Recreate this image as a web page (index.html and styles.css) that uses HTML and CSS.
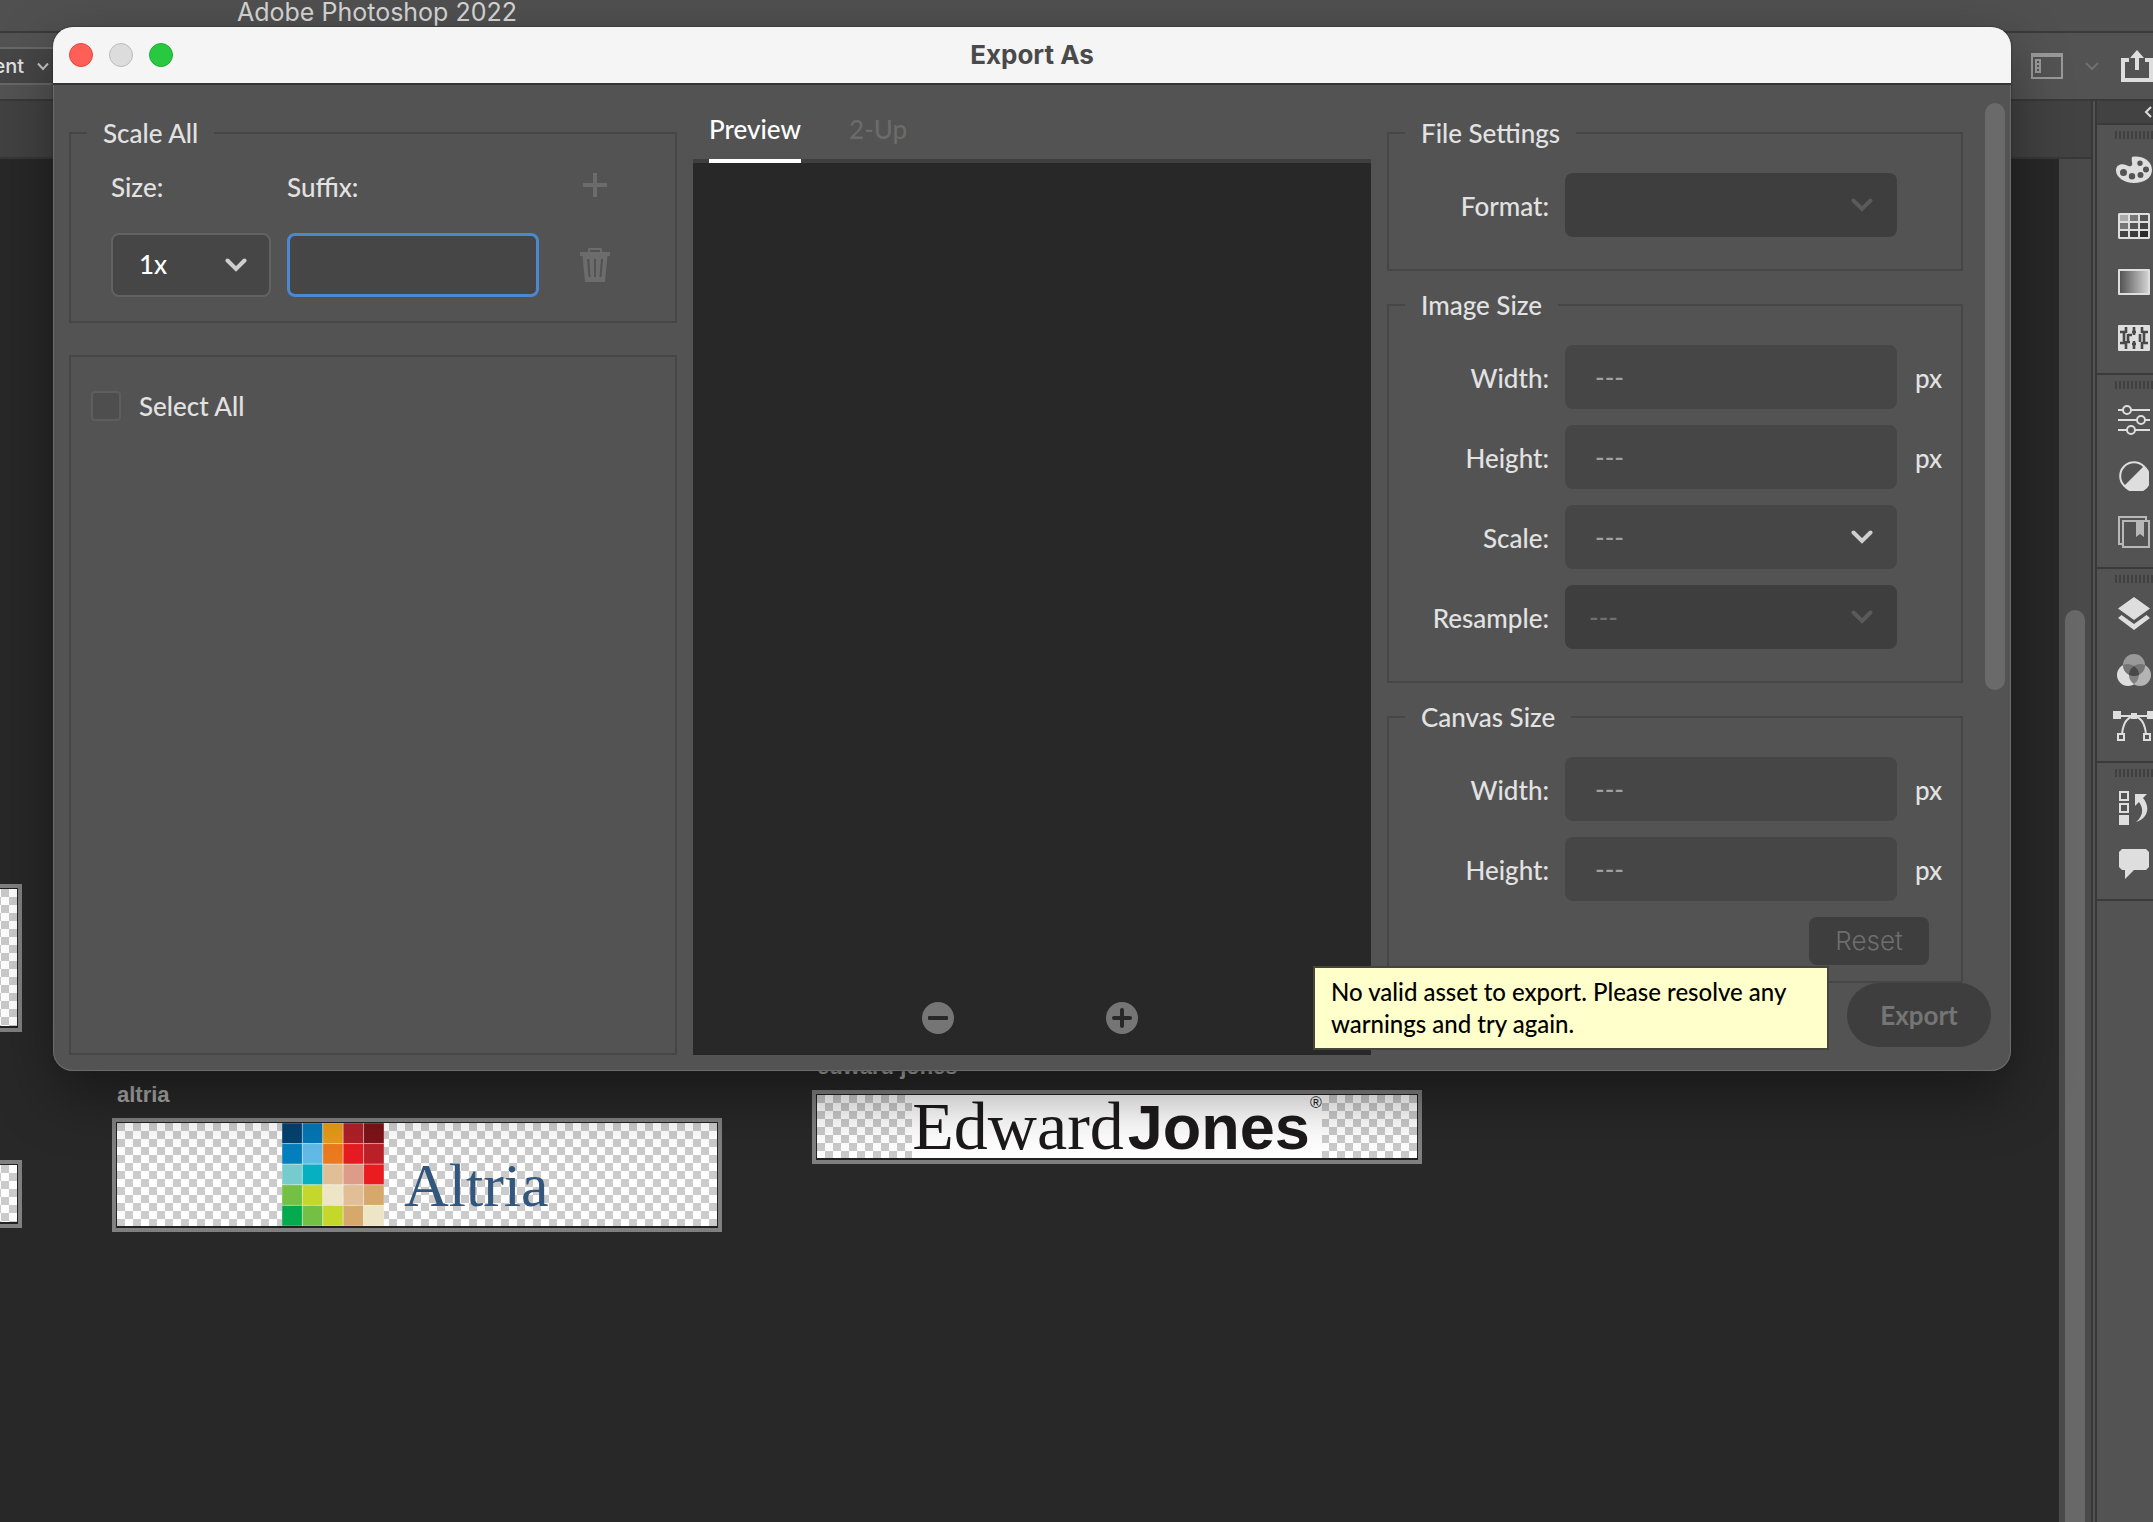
FILE: index.html
```html
<!DOCTYPE html>
<html lang="en">
<head>
<meta charset="utf-8">
<title>Adobe Photoshop 2022</title>
<link rel="stylesheet" href="styles.css">
</head>
<body>
<div class="app">
  <header class="titlebar">Adobe Photoshop 2022</header>
  <div class="options">
    <button class="options-mode" type="button">ent
      <svg width="14" height="9" viewBox="0 0 14 9"><path d="M2 1.500l5 5.500 5-5.500" fill="none" stroke="#c8c8c8" stroke-width="2"/></svg>
    </button>
    <div class="options-right">
      <button class="icon-button" type="button" aria-label="Workspace">
        <svg width="32" height="26" viewBox="0 0 32 26"><path d="M0 0h32v26H0zM2 4v20h28V4z" fill="#9a9a9a" fill-rule="evenodd"/><path d="M4 6h6v14H4zM6 8v2h2V8zM6 12v2h2v-2zM6 16v2h2v-2z" fill="#9a9a9a" fill-rule="evenodd"/></svg>
      </button>
      <svg width="14" height="9" viewBox="0 0 14 9"><path d="M1 1l6 6 6-6" fill="none" stroke="#707070" stroke-width="2"/></svg>
      <button class="icon-button" type="button" aria-label="Share">
        <svg width="32" height="32" viewBox="0 0 32 32"><path d="M8 8H0v24h32V8h-8v4h4v16H4V12h4z" fill="#dedede"/><path d="M16 0l7 8h-5v12h-4V8H9z" fill="#dedede"/></svg>
      </button>
    </div>
  </div>
  <div class="workspace">
    <main class="document">
      <div class="document-tabs"></div>
      <div class="document-view">
        <div class="canvas">
          <div class="artboard artboard-edge-a"><div class="checker"></div></div>
          <div class="artboard artboard-edge-b"><div class="checker"></div></div>
          <div class="artboard-group group-altria">
            <div class="artboard-name">altria</div>
            <div class="artboard">
              <div class="checker altria">
                <svg width="102" height="103" viewBox="0 0 102 103">
                  <g stroke="#fff" stroke-opacity=".35" stroke-width="1">
                    <path d="M0 0h20.400v20.600H0z" fill="#04426f"/><path d="M20.400 0h20.400v20.600H20.400z" fill="#0477b6"/><path d="M40.800 0h20.400v20.600H40.800z" fill="#e69a18"/><path d="M61.200 0h20.400v20.600H61.200z" fill="#b02028"/><path d="M81.600 0H102v20.600H81.600z" fill="#7c1418"/>
                    <path d="M0 20.600h20.400v20.600H0z" fill="#0480be"/><path d="M20.400 20.600h20.400v20.600H20.400z" fill="#62bae6"/><path d="M40.800 20.600h20.400v20.600H40.800z" fill="#ec7a1e"/><path d="M61.200 20.600h20.400v20.600H61.200z" fill="#e61c22"/><path d="M81.600 20.600H102v20.600H81.600z" fill="#ba2228"/>
                    <path d="M0 41.200h20.400v20.600H0z" fill="#76cccc"/><path d="M20.400 41.200h20.400v20.600H20.400z" fill="#06b0c0"/><path d="M40.800 41.200h20.400v20.600H40.800z" fill="#e0be96"/><path d="M61.200 41.200h20.400v20.600H61.200z" fill="#dc9c88"/><path d="M81.600 41.200H102v20.600H81.600z" fill="#ea1c22"/>
                    <path d="M0 61.800h20.400v20.600H0z" fill="#74c044"/><path d="M20.400 61.800h20.400v20.600H20.400z" fill="#c4d82c"/><path d="M40.800 61.800h20.400v20.600H40.800z" fill="#eee4c6"/><path d="M61.200 61.800h20.400v20.600H61.200z" fill="#e2be96"/><path d="M81.600 61.800H102v20.600H81.600z" fill="#d6a86c"/>
                    <path d="M0 82.400h20.400V103H0z" fill="#04aa4e"/><path d="M20.400 82.400h20.400V103H20.400z" fill="#74c044"/><path d="M40.800 82.400h20.400V103H40.800z" fill="#c4d82c"/><path d="M61.200 82.400h20.400V103H61.200z" fill="#d6a86c"/><path d="M81.600 82.400H102V103H81.600z" fill="#eee4c6"/>
                  </g>
                </svg>
                <span class="altria-word">Altria</span>
              </div>
            </div>
          </div>
          <div class="artboard-group group-jones">
            <div class="artboard-name">edward jones</div>
            <div class="artboard">
              <div class="checker jones">
                <div class="jones-logo"><span class="jones-first">Edward</span><span class="jones-last">Jones</span><span class="jones-mark">®</span></div>
              </div>
            </div>
          </div>
        </div>
        <div class="scroll-track"><div class="scroll-thumb"></div></div>
      </div>
    </main>
    <aside class="dock">
      <button class="dock-collapse" type="button" aria-label="Expand panels"><svg width="8" height="12" viewBox="0 0 8 12"><path d="M7 1L2 6l5 5" fill="none" stroke="#dedede" stroke-width="2"/></svg></button>
      <div class="dock-group">
        <div class="grip"></div>
        <button class="dock-icon" type="button" aria-label="Color"><svg width="36" height="28" viewBox="0 0 36 28"><path fill="#dedede" fill-rule="evenodd" d="M16 1C23-1 36 3 36 14c0 8-8 13-18 13C8 27 0 21 0 14.500 0 9 5 7 10 9c3 1.500 5 2 6 0 .8-2-1-4 0-8zM7.500 13a3.500 3.500 0 1 0 0 7 3.500 3.500 0 0 0 0-7zM16 17a3.200 3.200 0 1 0 0 6.400 3.200 3.200 0 0 0 0-6.400zM24.500 16a3 3 0 1 0 0 6 3 3 0 0 0 0-6zM30 10.500a3 3 0 1 0 0 6 3 3 0 0 0 0-6zM24 4.500a2.700 2.700 0 1 0 0 5.400 2.700 2.700 0 0 0 0-5.400z"/></svg></button>
        <button class="dock-icon" type="button" aria-label="Swatches"><svg width="32" height="26" viewBox="0 0 32 26"><path fill="#dedede" d="M1 0h30l1 1v24l-1 1H1l-1-1V1z"/><path fill="#aaa" d="M2 2h8v6H2z"/><path fill="#777" d="M12 2h8v6h-8z"/><path fill="#555" d="M22 2h8v6h-8z"/><path fill="#777" d="M2 10h8v6H2z"/><path fill="#555" d="M12 10h8v6h-8z"/><path fill="#444" d="M22 10h8v6h-8zM2 18h8v6H2z"/><path fill="#3a3a3a" d="M12 18h8v6h-8z"/><path fill="#2c2c2c" d="M22 18h8v6h-8z"/></svg></button>
        <button class="dock-icon" type="button" aria-label="Gradients"><svg width="32" height="26" viewBox="0 0 32 26"><defs><linearGradient id="fade"><stop offset="0" stop-color="#555"/><stop offset="1" stop-color="#d0d0d0"/></linearGradient></defs><rect width="32" height="26" rx="1" fill="#dedede"/><path d="M2 2h28v22H2z" fill="url(#fade)"/></svg></button>
        <button class="dock-icon" type="button" aria-label="Patterns"><svg width="32" height="26" viewBox="0 0 32 26"><rect width="32" height="26" rx="1" fill="#dedede"/><path d="M2 7h6M8 2v6M2 18h6M8 16v8M6 8v10M16 2v8M14 10h-4M10 9v8M16 16v8M12 17h-3M24 2v6M24 7h6M22 9v8M26 8v10M24 18h6M24 17v7M14 7h4M14 19h4" fill="none" stroke="#484848" stroke-width="2.600"/></svg></button>
      </div>
      <div class="dock-group">
        <div class="grip"></div>
        <button class="dock-icon" type="button" aria-label="Properties"><svg width="32" height="30" viewBox="0 0 32 30"><path d="M0 5h32M0 15h32M0 25h32" stroke="#dedede" stroke-width="2"/><g fill="#535353" stroke="#dedede" stroke-width="2"><circle cx="9" cy="5" r="4"/><circle cx="23" cy="15" r="4"/><circle cx="13" cy="25" r="4"/></g></svg></button>
        <button class="dock-icon" type="button" aria-label="Adjustments"><svg width="30" height="30" viewBox="0 0 30 30"><circle cx="15" cy="15" r="13.800" fill="none" stroke="#dedede" stroke-width="2"/><path d="M25 5A14.500 14.500 0 1 1 5 25z" fill="#dedede"/></svg></button>
        <button class="dock-icon" type="button" aria-label="Libraries"><svg width="32" height="32" viewBox="0 0 32 32"><path d="M5 28H1V1h27v4M5 5h26v26H5z" fill="none" stroke="#b8b8b8" stroke-width="2"/><path d="M18 5h8v16l-4-3-4 3z" fill="#b8b8b8"/></svg></button>
      </div>
      <div class="dock-group">
        <div class="grip"></div>
        <button class="dock-icon" type="button" aria-label="Layers"><svg width="32" height="34" viewBox="0 0 32 34"><path d="M16 0l16 11.500L16 23 0 11.500zM3.500 18L16 27l12.500-9L32 21 16 33 0 21z" fill="#dedede"/></svg></button>
        <button class="dock-icon" type="button" aria-label="Channels"><svg width="34" height="32" viewBox="0 0 34 32"><circle cx="11" cy="21" r="11" fill="#dedede"/><circle cx="23" cy="21" r="11" fill="#b4b4b4"/><circle cx="17" cy="11" r="11" fill="#999"/><path d="M6 11.200A11 11 0 0 1 17 12a11 11 0 0 1 11-.8A11 11 0 0 1 17 22 11 11 0 0 1 6 11.200z" fill="#757575"/><path d="M17 12c7 6 6 14 0 18-6-4-7-12 0-18z" fill="#808080"/><path d="M17 12c4 3 5 6 5 9-3 1.400-7 1.400-10 0 0-3 1-6 5-9z" fill="#484848"/></svg></button>
        <button class="dock-icon" type="button" aria-label="Paths"><svg width="42" height="30" viewBox="0 0 42 30"><path d="M4 5h34M21 5C12 7 10 15 9 23M21 5c9 2 11 10 12 18" fill="none" stroke="#dedede" stroke-width="2"/><path d="M0 0h8v8H0zM34 0h8v8h-8zM18 2h6v6h-6z" fill="#dedede"/><path d="M5 23h6v6H5zM31 23h6v6h-6z" fill="#535353" stroke="#dedede" stroke-width="2"/></svg></button>
      </div>
      <div class="dock-group">
        <div class="grip"></div>
        <button class="dock-icon" type="button" aria-label="History"><svg width="30" height="34" viewBox="0 0 30 34"><path d="M1 1h8v8H1zM1 13h8v8H1z" fill="none" stroke="#dedede" stroke-width="2"/><path d="M0 24h10v10H0z" fill="#dedede"/><path d="M16 3h12l-4 4c7 8 6 20-7 24 7-6 8-13 3-20l-4 4z" fill="#dedede"/></svg></button>
        <button class="dock-icon" type="button" aria-label="Comments"><svg width="30" height="30" viewBox="0 0 30 30"><path d="M3 0h24l3 3v15l-3 3H15l-9 9v-9H3l-3-3V3z" fill="#dedede"/></svg></button>
      </div>
      <div class="dock-rest"></div>
    </aside>
  </div>

  <section class="dialog" role="dialog" aria-labelledby="dialog-title">
    <div class="dialog-title">
      <div class="lights"><button class="light red" type="button" aria-label="Close"></button><button class="light gray" type="button" aria-label="Minimize" disabled></button><button class="light green" type="button" aria-label="Zoom"></button></div>
      <h1 id="dialog-title">Export As</h1>
    </div>
    <div class="dialog-body">
      <div class="left">
        <fieldset class="group">
          <legend>Scale All</legend>
          <div class="scale-grid">
            <label for="size">Size:</label>
            <label for="suffix">Suffix:</label>
            <button class="icon-button add-button" type="button" aria-label="Add scale" disabled><svg width="24" height="24" viewBox="0 0 24 24"><path d="M12 0v24M0 12h24" stroke="#6c6c6c" stroke-width="4"/></svg></button>
            <div class="select-wrap">
              <select id="size" class="field size-field"><option>1x</option></select>
              <svg class="chevron" width="22" height="14" viewBox="0 0 22 14"><path d="M2.500 2.500l8.500 8.500 8.500-8.500" fill="none" stroke="#cfcfcf" stroke-width="4" stroke-linecap="round"/></svg>
            </div>
            <input id="suffix" class="field suffix-field" type="text">
            <button class="icon-button" type="button" aria-label="Delete scale" disabled><svg width="30" height="34" viewBox="0 0 30 34"><path fill="#6c6c6c" fill-rule="evenodd" d="M8 4V1l1-1h12l1 1v3h8v4h-2.500L25 34H5L2.500 8H0V4zM10 2v2h10V2zM7 11l1.500 18h2L9.300 11zM14 11v18h2V11zM21 11l-1.500 18h2L23 11z"/></svg></button>
          </div>
        </fieldset>
        <div class="assets">
          <label class="select-all"><input type="checkbox" disabled>Select All</label>
        </div>
      </div>
      <div class="center">
        <div class="tabs" role="tablist">
          <button class="tab active" role="tab" type="button" aria-selected="true">Preview</button>
          <button class="tab" role="tab" type="button" aria-selected="false" disabled>2-Up</button>
        </div>
        <div class="preview">
          <button class="icon-button" type="button" aria-label="Zoom out"><svg width="32" height="32" viewBox="0 0 32 32"><circle cx="16" cy="16" r="16" fill="#757575"/><rect x="6" y="14" width="20" height="4" rx="1" fill="#282828"/></svg></button>
          <button class="icon-button" type="button" aria-label="Zoom in"><svg width="32" height="32" viewBox="0 0 32 32"><circle cx="16" cy="16" r="16" fill="#757575"/><path d="M16 8v16M8 16h16" stroke="#282828" stroke-width="4" stroke-linecap="round"/></svg></button>
        </div>
      </div>
      <div class="right">
        <fieldset class="group">
          <legend>File Settings</legend>
          <div class="settings">
            <label for="format">Format:</label>
            <div class="select-wrap">
              <select id="format" class="field" disabled><option></option></select>
              <svg class="chevron" width="22" height="14" viewBox="0 0 22 14"><path d="M2.500 2.500l8.500 8.500 8.500-8.500" fill="none" stroke="#5a5a5a" stroke-width="4" stroke-linecap="round"/></svg>
            </div>
          </div>
        </fieldset>
        <fieldset class="group">
          <legend>Image Size</legend>
          <div class="settings">
            <label for="image-width">Width:</label><input id="image-width" class="field" type="text" value="---"><span class="unit">px</span>
            <label for="image-height">Height:</label><input id="image-height" class="field" type="text" value="---"><span class="unit">px</span>
            <label for="scale">Scale:</label>
            <div class="select-wrap">
              <select id="scale" class="field"><option>---</option></select>
              <svg class="chevron" width="22" height="14" viewBox="0 0 22 14"><path d="M2.500 2.500l8.500 8.500 8.500-8.500" fill="none" stroke="#cfcfcf" stroke-width="4" stroke-linecap="round"/></svg>
            </div>
            <label for="resample">Resample:</label>
            <div class="select-wrap">
              <select id="resample" class="field" disabled><option>---</option></select>
              <svg class="chevron" width="22" height="14" viewBox="0 0 22 14"><path d="M2.500 2.500l8.500 8.500 8.500-8.500" fill="none" stroke="#5a5a5a" stroke-width="4" stroke-linecap="round"/></svg>
            </div>
          </div>
        </fieldset>
        <fieldset class="group canvas-group">
          <legend>Canvas Size</legend>
          <div class="settings">
            <label for="canvas-width">Width:</label><input id="canvas-width" class="field" type="text" value="---"><span class="unit">px</span>
            <label for="canvas-height">Height:</label><input id="canvas-height" class="field" type="text" value="---"><span class="unit">px</span>
            <button class="reset" type="button" disabled>Reset</button>
          </div>
        </fieldset>
        <button class="export" type="button" disabled>Export</button>
        <div class="panel-thumb"></div>
        <div class="tooltip" role="tooltip">No valid asset to export. Please resolve any warnings and try again.</div>
      </div>
    </div>
  </section>
</div>
</body>
</html>
```
FILE: styles.css
```css
* { box-sizing: border-box; }
body {
  margin: 0;
  background: #282828;
  color: #e2e2e2;
  font: 500 26px/32px Lato, "Open Sans", sans-serif;
}
button, input, select { font: inherit; color: inherit; margin: 0; }
svg { display: block; flex: none; }
.app { position: relative; display: flex; flex-direction: column; height: 100vh; overflow: hidden; }

.titlebar {
  height: 33px;
  padding-left: 237px;
  background: #505050;
  border-bottom: 2px solid #3a3a3a;
  color: #d6d6d6;
  font: 25px/24px Inter, sans-serif;
}
.options {
  display: flex; align-items: center; justify-content: space-between;
  height: 68px;
  background: #535353;
  border-bottom: 2px solid #393939;
}
.options-mode {
  display: flex; align-items: center; justify-content: flex-end; gap: 12px;
  width: 53px; height: 38px;
  padding: 0 3px 0 0;
  border: solid #686868; border-width: 2px 0;
  background: #464646;
  font-family: Inter, sans-serif; font-size: 20px;
}
.options-right { display: flex; align-items: center; gap: 22px; }
.icon-button { display: flex; align-items: center; justify-content: center; padding: 0; border: 0; background: none; }

.workspace { flex: 1; display: flex; min-height: 0; }
.document { flex: 1; display: flex; flex-direction: column; min-width: 0; }
.document-tabs { height: 58px; background: #424242; border-bottom: 2px solid #383838; }
.document-view { flex: 1; display: flex; }
.canvas { position: relative; flex: 1; overflow: hidden; background: #282828; }
.scroll-track { width: 32px; padding: 451px 6px 0; background: #4a4a4a; }
.scroll-thumb { height: 100%; border-radius: 10px 10px 0 0; background: #686868; }

.artboard { padding: 1px 1px 2px; border: 4px solid #808080; background: #222; }
.artboard .checker { height: 100%; background: conic-gradient(#fff 25%, #cbcbcb 0 50%, #fff 0 75%, #cbcbcb 0) 0 0 / 16px 16px; }
.artboard-edge-a { position: absolute; left: -100px; top: 725px; width: 122px; height: 148px; }
.artboard-edge-b { position: absolute; left: -100px; top: 1001px; width: 122px; height: 68px; }
.artboard-group { position: absolute; width: 610px; }
.group-altria { left: 112px; top: 919px; }
.group-jones { left: 812px; top: 891px; }
.artboard-name { height: 40px; padding-left: 5px; color: #a8a8a8; font: bold 22px/34px "Liberation Sans", sans-serif; }
.artboard .altria { display: flex; align-items: flex-end; height: 103px; padding-left: 165px; gap: 20px; }
.altria-word { color: #33567c; font: 62px/82px "Liberation Serif", serif; }
.artboard .jones { display: flex; justify-content: center; height: 63px; }
.jones-logo { display: flex; align-items: baseline; justify-content: center; width: 410px; background: #fff; color: #1c1a1b; line-height: 62px; }
.jones-first { font-family: "Liberation Serif", serif; font-size: 68px; }
.jones-last { margin-left: 4px; font-family: "Liberation Sans", sans-serif; font-size: 63px; font-weight: bold; }
.jones-mark { align-self: flex-start; font: 16px/16px "Liberation Sans", sans-serif; }

.dock { display: flex; flex-direction: column; width: 62px; border-left: 6px double #383838; background: #535353; }
.dock-collapse { display: flex; align-items: center; justify-content: flex-end; height: 22px; padding: 0 1px 0 0; border: 0; background: #424242; }
.dock-group { padding: 6px 0 7px; border-top: 2px solid #3a3a3a; }
.grip { height: 8px; margin: 0 0 3px 18px; background: repeating-linear-gradient(90deg, #404040 0 2px, transparent 2px 4px); }
.dock-icon { display: flex; align-items: center; justify-content: center; width: 56px; height: 56px; padding: 0 0 0 18px; border: 0; background: none; }
.dock-rest { flex: 1; border-top: 2px solid #3a3a3a; }

.dialog {
  position: absolute; left: 53px; right: 142px; top: 27px;
  border-radius: 20px;
  background: #535353;
  box-shadow: inset 0 0 0 1px #6a6a6a, 0 0 2px #222, 0 24px 60px rgba(0, 0, 0, .4);
}
.dialog-title {
  display: grid; grid-template-columns: 1fr auto 1fr; align-items: center;
  height: 58px;
  border-bottom: 2px solid #343434; border-radius: 20px 20px 0 0;
  background: #f5f5f5;
}
.dialog-title h1 { margin: 0; color: #4a4a4a; font: bold 26px/32px Inter, sans-serif; }
.lights { display: flex; gap: 16px; padding-left: 16px; }
.light { width: 24px; height: 24px; padding: 0; border: 1px solid; border-radius: 50%; }
.red { background: #ff5f57; border-color: #e2483f; }
.gray { background: #dcdcdc; border-color: #bcbcbc; }
.green { background: #28c840; border-color: #1eae30; }

.dialog-body { display: grid; grid-template-columns: 608px 1fr 624px; gap: 16px; padding-left: 16px; }
.left, .right { display: flex; flex-direction: column; padding-top: 32px; }
.left { gap: 32px; padding-bottom: 16px; }
.group { min-width: 0; margin: 0; padding: 24px 0 32px; border: 2px solid #464646; }
.group legend { margin-left: 16px; padding: 0 16px; }
.left .group { padding-bottom: 24px; }
.scale-grid { display: grid; grid-template-columns: 160px 1fr 80px; column-gap: 16px; row-gap: 32px; padding: 0 40px; }
.scale-grid label { height: 28px; line-height: 28px; }
.add-button { align-self: start; }
.field {
  display: block; width: 100%; height: 64px;
  padding: 0 24px 0 30px;
  appearance: none;
  border: 0; border-radius: 8px; outline: 0;
  background: #464646;
}
.right .field { color: #a0a0a0; }
.right .field:disabled { padding-left: 24px; background: #3e3e3e; color: #6e6e6e; opacity: 1; }
.size-field { padding: 0 24px 2px 26px; border: 2px solid #626262; color: #fff; }
.suffix-field { border: 3px solid #4a88cf; }
.select-wrap { position: relative; }
.chevron { position: absolute; right: 24px; top: 25px; pointer-events: none; }
.assets { flex: 1; padding: 33px 20px; border: 2px solid #464646; }
.select-all { display: flex; align-items: center; gap: 18px; }
.select-all input { width: 30px; height: 30px; appearance: none; border: 2px solid #5e5e5e; border-radius: 4px; background: #4e4e4e; }

.center { display: flex; flex-direction: column; padding-bottom: 16px; }
.tabs { display: flex; gap: 48px; height: 78px; padding: 0 16px; background: linear-gradient(#535353 0 74px, #3f3f3f 74px); }
.tab { padding: 28px 0 14px; border: 0; border-bottom: 4px solid transparent; background: none; color: #6b6b6b; }
.tab.active { border-color: #fff; color: #fff; }
.preview { flex: 1; display: flex; align-items: flex-end; justify-content: center; gap: 152px; padding: 0 4px 21px 0; background: #282828; }

.right { position: relative; }
.right .group { width: 576px; margin-bottom: 18px; }
.right .canvas-group { margin-bottom: 0; padding-bottom: 16px; }
.settings { display: grid; grid-template-columns: 160px 1fr 48px; gap: 16px; align-items: center; }
.settings label { grid-column: 1; padding-top: 2px; text-align: right; }
.unit { padding: 2px 0 0 2px; }
.reset { grid-column: 1 / -1; justify-self: end; width: 120px; height: 48px; margin-right: 32px; padding: 0; border: 0; border-radius: 8px; background: #3e3e3e; color: #6e6e6e; font-family: Inter, sans-serif; font-weight: 300; }
.export { align-self: flex-end; width: 144px; height: 64px; margin: 0 20px 24px 0; padding: 0; border: 0; border-radius: 32px; background: #3e3e3e; color: #757575; font-weight: bold; }
.panel-thumb { position: absolute; top: 18px; right: 6px; width: 20px; height: 587px; border-radius: 10px; background: #6a6a6a; }
.tooltip {
  position: absolute; right: 182px; bottom: 21px;
  width: 516px; padding: 8px 16px;
  border: 2px solid #45453a;
  background: #ffffcc; color: #000;
  font-size: 24px;
}
```
